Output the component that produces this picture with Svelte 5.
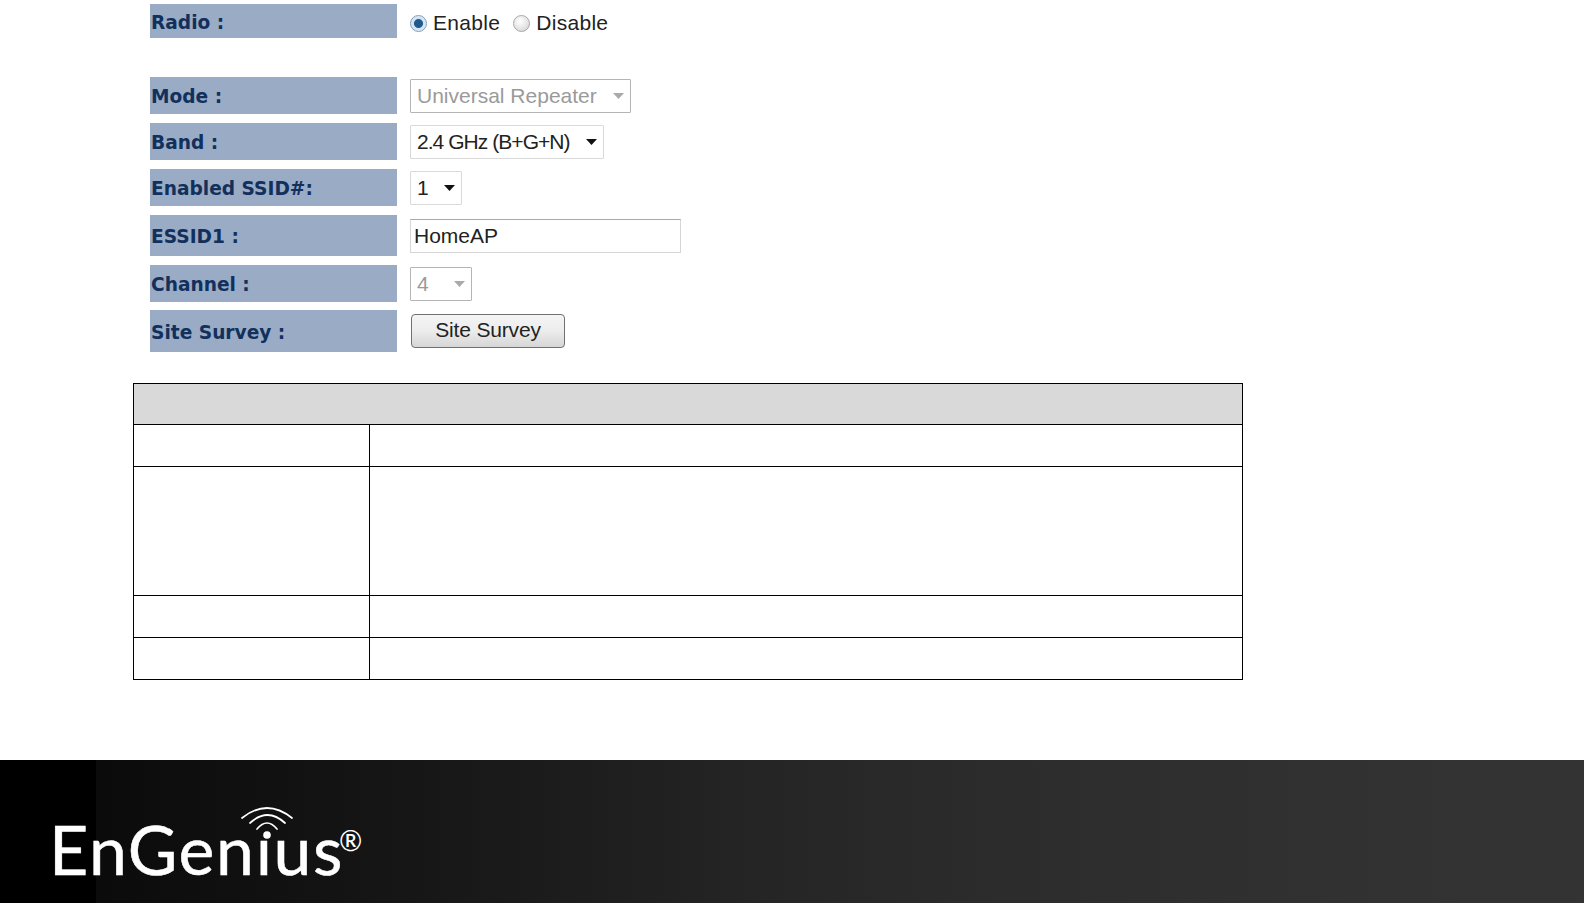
<script>
  const rows = [
    { label: 'Radio :', kind: 'radio' },
    { kind: 'spacer' },
    { label: 'Mode :', kind: 'mode' },
    { label: 'Band :', kind: 'band' },
    { label: 'Enabled SSID#:', kind: 'ssid' },
    { label: 'ESSID1 :', kind: 'essid' },
    { label: 'Channel :', kind: 'channel' },
    { label: 'Site Survey :', kind: 'survey' }
  ];
</script>

{#snippet caret(off)}
  <svg class="caret" class:off width="11" height="6" viewBox="0 0 11 6"><path d="M0 0h11L5.500 6z" /></svg>
{/snippet}

<div class="page">
  <main>
    <div class="form">
      {#each rows as row}
        {#if row.kind === 'spacer'}
          <div class="spacer"></div>
        {:else}
          <div class="label" class:tight={row.kind === 'survey'}>{row.label}</div>
          <div class="control" class:low={row.kind === 'radio'}>
            {#if row.kind === 'radio'}
              <span class="radio on"></span><span class="opt">Enable</span>
              <span class="radio"></span><span class="opt">Disable</span>
            {:else if row.kind === 'mode'}
              <div class="select off mode"><span>Universal Repeater</span>{@render caret(true)}</div>
            {:else if row.kind === 'band'}
              <div class="select band"><span>2.4 GHz (B+G+N)</span>{@render caret(false)}</div>
            {:else if row.kind === 'ssid'}
              <div class="select ssid"><span>1</span>{@render caret(false)}</div>
            {:else if row.kind === 'essid'}
              <input class="text" value="HomeAP" />
            {:else if row.kind === 'channel'}
              <div class="select off channel"><span>4</span>{@render caret(true)}</div>
            {:else}
              <button class="btn">Site Survey</button>
            {/if}
          </div>
        {/if}
      {/each}
    </div>

    <table>
      <colgroup><col class="c1" /><col /></colgroup>
      <thead><tr><th colspan="2"></th></tr></thead>
      <tbody>
        <tr class="r42"><td></td><td></td></tr>
        <tr class="r129"><td></td><td></td></tr>
        <tr class="r42"><td></td><td></td></tr>
        <tr class="r42"><td></td><td></td></tr>
      </tbody>
    </table>
  </main>

  <footer>
    <div class="logo">
      <span class="word">EnGenius</span><span class="reg">®</span>
      <svg class="wifi" width="54" height="40" viewBox="0 0 54 40" fill="none" stroke="#fff" stroke-width="1.700" stroke-linecap="round">
        <!-- hides the font's own i dot, the logo uses the wifi dot instead -->
        <circle cx="26" cy="28" r="8" fill="#111" stroke="none" />
        <path d="M2 15Q27 -5 52 15" />
        <path d="M10 20Q27.500 4 45 20" />
        <path d="M17 26Q27 14 37 26" />
        <circle cx="27" cy="32" r="3.800" fill="#fff" stroke="none" />
      </svg>
    </div>
  </footer>
</div>

<style>
  :global(body) {
    margin: 0;
    background: #fff;
  }

  .page {
    height: 903px;
    display: flex;
    flex-direction: column;
    justify-content: space-between;
    overflow: hidden;
    font-family: "Liberation Sans", Arial, sans-serif;
  }

  main {
    padding: 4px 0 0 133px;
  }

  .form {
    display: grid;
    grid-template-columns: 247px 1fr;
    grid-template-rows: 34px 21px 37px 37px 37px 41px 37px 42px;
    row-gap: 9px;
    margin: 0 0 30px 17px;
  }

  .spacer {
    grid-column: 1 / 3;
  }

  .label {
    background: #9aabc5;
    color: #12305c;
    font: bold 18.600px/1 "DejaVu Sans", Verdana, sans-serif;
    display: flex;
    align-items: center;
    padding: 4px 0 0 1px;
    box-sizing: border-box;
    white-space: nowrap;
  }

  .label.tight {
    margin: -1px 0 1px;
  }

  .control {
    display: flex;
    align-items: center;
    padding-left: 13px;
    font-size: 21px;
    color: #222;
  }

  .control.low {
    padding-top: 4px;
    box-sizing: border-box;
  }

  .radio {
    width: 15px;
    height: 15px;
    border-radius: 50%;
    border: 1.500px solid #a8a8a8;
    background: radial-gradient(circle at 40% 35%, #fff, #d0d0d0);
    margin-right: 6px;
    flex: none;
  }

  .radio.on {
    border-color: #7f9db9;
    background: radial-gradient(circle, #1f5a8c 0 4px, #cfe2f0 5px, #eef5fa);
  }

  .opt {
    margin-right: 13px;
    letter-spacing: 0.300px;
  }

  .select {
    height: 34px;
    box-sizing: border-box;
    border: 1px solid #d9d9d9;
    display: flex;
    align-items: center;
    justify-content: space-between;
    padding: 0 6px 0 6px;
    background: #fff;
    color: #222;
    border-radius: 1px;
  }

  .select.off {
    border: 1.500px solid #b5b5b5;
    color: #9a9a9a;
  }

  .mode { width: 221px; }
  .band { width: 194px; }
  .band span { letter-spacing: -0.950px; }
  .ssid { width: 52px; }
  .channel { width: 62px; }

  .caret path { fill: #111; }
  .caret.off path { fill: #aaa; }

  .text {
    width: 271px;
    height: 34px;
    box-sizing: border-box;
    border: 1px solid #d6d6d6;
    border-top-color: #a9a9a9;
    padding: 0 3px;
    font: inherit;
    color: #222;
    outline: none;
  }

  .btn {
    width: 154px;
    height: 34px;
    margin: -2px 0 0 1px;
    border: 1.500px solid #707070;
    border-radius: 4px;
    background: linear-gradient(#f5f5f5, #ececec 50%, #d6d6d6);
    font: inherit;
    letter-spacing: -0.150px;
    color: #222;
    padding: 0 0 3px;
  }

  table {
    width: 1110px;
    table-layout: fixed;
    border-collapse: collapse;
  }

  .c1 { width: 236px; }

  th, td {
    border: 1px solid #000;
    padding: 0;
  }

  th {
    height: 40px;
    background: #d9d9d9;
  }

  .r42 td { height: 41px; }
  .r129 td { height: 128px; }

  footer {
    height: 143px;
    background: linear-gradient(to right, #000 0 96px, #0b0b0b 96px, #141414 355px, #1c1c1c 555px, #252525 760px, #2c2c2c 1000px, #323232 1400px, #333);
    padding-left: 49px;
  }

  .logo {
    position: relative;
    display: inline-block;
    color: #fff;
    margin-top: 40px;
    white-space: nowrap;
    font-family: Lato, "Open Sans", sans-serif;
    line-height: 80px;
  }

  .word {
    font-size: 68px;
    letter-spacing: 1.600px;
    -webkit-text-stroke: 0.500px #fff;
  }

  .reg {
    font-size: 28px;
    vertical-align: 24px;
    margin-left: -5px;
  }

  .wifi {
    position: absolute;
    left: 191px;
    top: 3px;
  }
</style>
